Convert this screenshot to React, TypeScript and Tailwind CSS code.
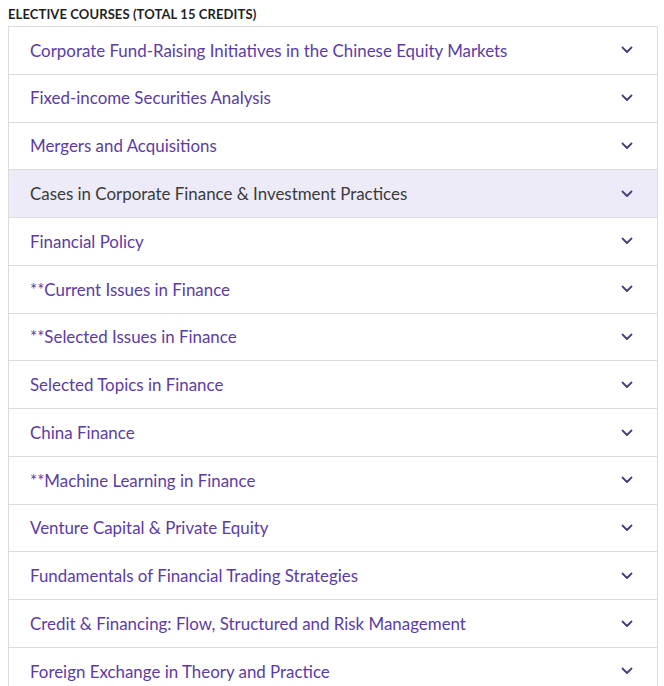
import React from "react";

const courses = [
  "Corporate Fund-Raising Initiatives in the Chinese Equity Markets",
  "Fixed-income Securities Analysis",
  "Mergers and Acquisitions",
  "Cases in Corporate Finance & Investment Practices",
  "Financial Policy",
  "**Current Issues in Finance",
  "**Selected Issues in Finance",
  "Selected Topics in Finance",
  "China Finance",
  "**Machine Learning in Finance",
  "Venture Capital & Private Equity",
  "Fundamentals of Financial Trading Strategies",
  "Credit & Financing: Flow, Structured and Risk Management",
  "Foreign Exchange in Theory and Practice",
];

function Chevron() {
  return (
    <svg width="12" height="8" viewBox="0 0 12 8" fill="none">
      <path d="M1.5 1.5 L6 6 L10.5 1.5" stroke="#4a3b85" strokeWidth="1.8" strokeLinecap="round" strokeLinejoin="round" />
    </svg>
  );
}

export default function App() {
  return (
    <div className="bg-white w-[664px] h-[686px] overflow-hidden px-[8px]" style={{ fontFamily: "Lato, 'Open Sans', sans-serif" }}>
      <div className="pt-[5px] pb-[3px] text-[13px] leading-[18px] font-bold text-[#1f1f1f] tracking-[0.1px]">
        ELECTIVE COURSES (TOTAL 15 CREDITS)
      </div>
      <div className="w-[650px] border border-[#dcdcdc] border-b-0">
        {courses.map((c, i) => (
          <div
            key={i}
            className={`h-[47.77px] flex items-center justify-between border-b border-[#dcdcdc] pl-[21px] pr-[24px] ${i === 3 ? "bg-[#edebf7]" : "bg-white"}`}
          >
            <span className={`text-[16.9px] ${i === 3 ? "text-[#3a3a3a]" : "text-[#5b3ca3]"}`}>{c}</span>
            <Chevron />
          </div>
        ))}
      </div>
    </div>
  );
}
